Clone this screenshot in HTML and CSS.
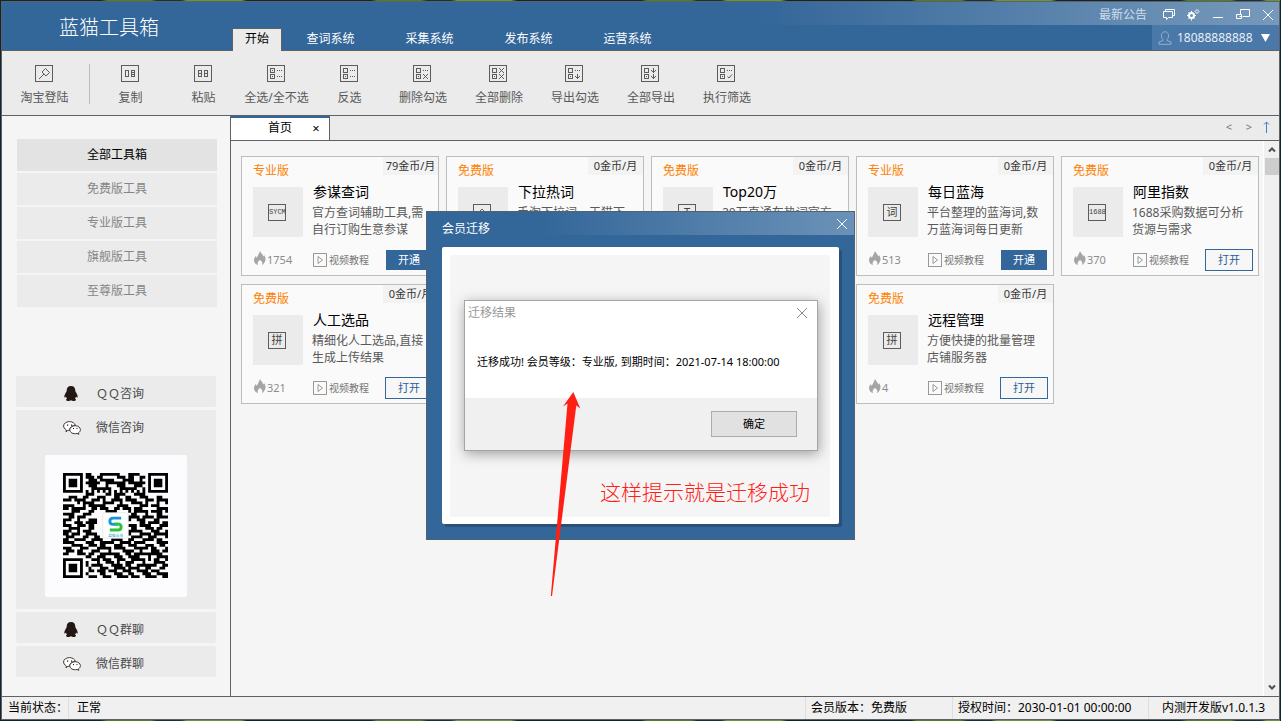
FILE: index.html
```html
<!DOCTYPE html>
<html lang="zh-CN">
<head>
<meta charset="utf-8">
<title>蓝猫工具箱</title>
<link rel="stylesheet" href="styles.css">
</head>
<body>
<svg class="defs" aria-hidden="true">
  <symbol id="frame" viewBox="0 0 18 17"><rect x=".5" y=".5" width="17" height="16"/></symbol>
  <symbol id="box-dot-top" viewBox="0 0 18 17"><rect x="3.500" y="3.500" width="4" height="4"/><path d="M5 5.500h1"/></symbol>
  <symbol id="box-top" viewBox="0 0 18 17"><rect x="3.500" y="3.500" width="4" height="4"/></symbol>
  <symbol id="box-dot-low" viewBox="0 0 18 17"><rect x="3.500" y="9.500" width="4" height="4"/><path d="M5 11.500h1"/></symbol>
  <symbol id="dots" viewBox="0 0 18 17"><path d="M10 5.500h1m1 0h1m1 0h1"/></symbol>
  <symbol id="cross" viewBox="0 0 18 17"><path d="M10 3l5 5M15 3l-5 5"/></symbol>
  <symbol id="down" viewBox="0 0 18 17"><path d="M12.500 3v5M10.500 5.500l2 2 2-2"/></symbol>
  <symbol id="flame" viewBox="0 0 12 14"><path d="M6 0c.5 2 3 3 3 5.500C10 5 10 4 10 4c1.500 2 2 4 1 6.500S8.500 14 8 14c1-2 0-4-2-5-2 1-3 3-2 5-2-.5-4-2-4-5 0-2 1-3 2-4l.5 2C4 5 5 2.500 6 0z"/></symbol>
  <symbol id="play" viewBox="0 0 14 14"><rect x=".5" y=".5" width="13" height="13"/><path d="M5 3.500v7l4.500-3.500z"/></symbol>
  <symbol id="qq" viewBox="0 0 14 15"><path d="M7 0C4 0 2.700 2 2.700 4.500c0 1-.7 1.700-1.300 3C.5 9-.1 11 .6 11.500c.5.2 1-.6 1.300-1 .2.900.6 1.600 1.200 2.100-.9.4-1.300 1-.9 1.600.6 1 3.700.8 4.800 0 1.100.8 4.200 1 4.800 0 .4-.6 0-1.200-.9-1.600.6-.5 1-1.200 1.200-2.100.3.400.8 1.200 1.300 1 .7-.5.1-2.500-.8-4-.6-1.300-1.300-2-1.300-3C11.300 2 10 0 7 0z"/></symbol>
  <symbol id="wechat" viewBox="0 0 18 14"><path d="M3 11l.4-2C1.500 7.800.6 6.500.6 5 .6 2.500 3.200.6 6.500.6c3 0 5.500 1.700 5.900 4-3.200-.1-5.700 1.800-5.700 4.100l.1.700c-.7.1-1.300 0-2-.1z"/><path d="M12.200 4.700c2.900 0 5.200 1.800 5.200 4 0 1.300-.7 2.300-1.900 3.100l.3 1.500-1.800-.8c-4 .9-7.200-1-7.200-3.800 0-2.200 2.400-4 5.400-4z"/><path class="eyes" d="M4 3.500h1.200v1.200H4zM8 3.500h1.200v1.200H8zM10 7h1v1h-1zM13.500 7h1v1h-1z"/></symbol>
</svg>

<div class="app">
  <header class="header">
    <h1 class="brand">蓝猫工具箱</h1>
    <nav class="menu">
      <a class="menu-tab active" href="#">开始</a>
      <a class="menu-tab" href="#">查词系统</a>
      <a class="menu-tab" href="#">采集系统</a>
      <a class="menu-tab" href="#">发布系统</a>
      <a class="menu-tab" href="#">运营系统</a>
    </nav>
    <div class="window-area">
      <div class="window-bar">
        <a class="notice" href="#">最新公告</a>
        <button class="win-btn" aria-label="消息"><svg width="12" height="12" viewBox="0 0 12 12"><path d="M2.500 2.500v-2h9v6h-2M.5 2.500h9v6h-4l-2 2v-2h-3z"/></svg></button>
        <button class="win-btn" aria-label="设置"><svg width="13" height="12" viewBox="0 0 13 12"><circle cx="4.500" cy="6.500" r="2.500" stroke-width="2"/><path d="M4.500 2v1M4.500 10v1.500M0 6.500h1M8 6.500h1M1.500 3.500l1 1M1.500 9.500l1-1M7.500 9.500l-1-1M10 .5l2 2-2 2-2-2z"/></svg></button>
        <button class="win-btn" aria-label="最小化"><svg width="12" height="12" viewBox="0 0 12 12"><path d="M1 8.500h10"/></svg></button>
        <button class="win-btn" aria-label="还原"><svg width="14" height="12" viewBox="0 0 14 12"><path d="M4.500 5.500v-5h9v7h-7M.5 5.500h5v4h-5zM3.500 7.500h2"/></svg></button>
        <button class="win-btn" aria-label="关闭"><svg width="12" height="12" viewBox="0 0 12 12"><path d="M1 1l10 10M11 1L1 11"/></svg></button>
      </div>
      <button class="account">
        <svg class="user" width="14" height="14" viewBox="0 0 14 14"><path d="M5 8.500C2.500 6 3 .8 7 .8s4.500 5.200 2 7.700v1l4 1.500v2.300H1V11l4-1.500z"/></svg>
        <span>18088888888</span>
        <svg class="caret" width="9" height="8" viewBox="0 0 9 8"><path d="M0 0h9L4.500 8z"/></svg>
      </button>
    </div>
  </header>

  <div class="toolbar">
    <button class="tool login"><svg class="tool-icon"><use href="#frame"/><path class="slant" d="M10.500 3.500l4 4-3.500 3.500-4-4zM9 9l-5 5"/></svg>淘宝登陆</button>
    <div class="tool-group">
      <button class="tool"><svg class="tool-icon"><use href="#frame"/><path d="M4.500 5.500h3v6h-3zM10.500 5.500h3v6h-3zM10.500 7.500h3M10.500 9.500h3"/></svg>复制</button>
      <button class="tool"><svg class="tool-icon"><use href="#frame"/><path d="M4.500 5.500h3v6h-3zM4.500 8.500h3M10.500 5.500h3v6h-3zM10.500 8.500h3"/></svg>粘贴</button>
      <button class="tool"><svg class="tool-icon"><use href="#frame"/><use href="#box-dot-top"/><use href="#box-dot-low"/><use href="#dots"/><use href="#dots" y="6"/></svg>全选/全不选</button>
      <button class="tool"><svg class="tool-icon"><use href="#frame"/><use href="#box-top"/><use href="#box-dot-low"/><use href="#dots"/><use href="#dots" y="6"/></svg>反选</button>
    </div>
    <div class="tool-group wide">
      <button class="tool"><svg class="tool-icon"><use href="#frame"/><use href="#box-top"/><use href="#box-dot-low"/><use href="#dots"/><use href="#cross" y="6"/></svg>删除勾选</button>
      <button class="tool"><svg class="tool-icon"><use href="#frame"/><use href="#box-top"/><use href="#box-dot-low"/><use href="#cross"/><use href="#cross" y="6"/></svg>全部删除</button>
      <button class="tool"><svg class="tool-icon"><use href="#frame"/><use href="#box-top"/><use href="#box-dot-low"/><use href="#dots"/><use href="#down" y="6"/></svg>导出勾选</button>
      <button class="tool"><svg class="tool-icon"><use href="#frame"/><use href="#box-top"/><use href="#box-dot-low"/><use href="#down"/><use href="#down" y="6"/></svg>全部导出</button>
      <button class="tool"><svg class="tool-icon"><use href="#frame"/><use href="#box-top"/><use href="#box-dot-low"/><use href="#dots"/><path class="slant" d="M10.500 11.500l1.500 1.500 3-3.500"/></svg>执行筛选</button>
    </div>
  </div>

  <div class="workspace">
    <aside class="sidebar">
      <nav class="filters">
        <a class="filter active" href="#">全部工具箱</a>
        <a class="filter" href="#">免费版工具</a>
        <a class="filter" href="#">专业版工具</a>
        <a class="filter" href="#">旗舰版工具</a>
        <a class="filter" href="#">至尊版工具</a>
      </nav>
      <div class="contacts">
        <a class="contact" href="#"><svg class="qq" width="14" height="15"><use href="#qq"/></svg><span>ＱＱ咨询</span></a>
        <div class="contact-open">
          <a class="contact" href="#"><svg class="wechat" width="18" height="14"><use href="#wechat"/></svg><span>微信咨询</span></a>
          <div class="qr-card">
            <svg class="qr" viewBox="0 0 37 37" role="img" aria-label="微信二维码">
              <path id="qr-modules" d=""/>
              <rect class="logo-bg" x="14" y="14" width="9" height="9" rx="1"/>
              <path class="logo-top" d="M20.500 15.900h-2.800q-1.200 0-1.200 1.100t1.200 1.100h1.800"/>
              <path class="logo-low" d="M16.500 20.100h2.800q1.200 0 1.200-1.100t-1.200-1.100h-1.300"/>
              <text x="18.500" y="22.400" text-anchor="middle">蓝猫出海</text>
            </svg>
          </div>
        </div>
        <a class="contact" href="#"><svg class="qq" width="14" height="15"><use href="#qq"/></svg><span>ＱＱ群聊</span></a>
        <a class="contact" href="#"><svg class="wechat" width="18" height="14"><use href="#wechat"/></svg><span>微信群聊</span></a>
      </div>
    </aside>

    <main class="main">
      <div class="page-tabs">
        <div class="page-tab"><span>首页</span><button class="tab-close" aria-label="关闭标签">×</button></div>
        <div class="tab-nav">
          <button class="nav-btn">&lt;</button>
          <button class="nav-btn">&gt;</button>
          <button class="nav-btn up" aria-label="收起"><svg width="7" height="12" viewBox="0 0 7 12"><path d="M3.500 12V1M1 3.500L3.500 1 6 3.500"/></svg></button>
        </div>
      </div>
      <div class="scroll-area">
        <div class="cards">
          <article class="card">
            <div class="card-head"><span class="tier">专业版</span><span class="price">79金币/月</span></div>
            <div class="card-body"><div class="thumb"><span class="glyph tiny">SYCM</span></div><div class="info"><h2>参谋查词</h2><p>官方查词辅助工具,需自行订购生意参谋</p></div></div>
            <div class="card-foot"><span class="heat"><svg class="flame"><use href="#flame"/></svg>1754</span><a class="video" href="#"><svg class="play"><use href="#play"/></svg>视频教程</a><button class="action solid">开通</button></div>
          </article>
          <article class="card">
            <div class="card-head"><span class="tier">免费版</span><span class="price">0金币/月</span></div>
            <div class="card-body"><div class="thumb"><svg class="tool-icon"><use href="#frame"/><path class="slant" d="M5 9l4-4 4 4"/></svg></div><div class="info"><h2>下拉热词</h2><p>手淘下拉词、天猫下</p></div></div>
          </article>
          <article class="card">
            <div class="card-head"><span class="tier">免费版</span><span class="price">0金币/月</span></div>
            <div class="card-body"><div class="thumb"><span class="glyph">T</span></div><div class="info"><h2>Top20万</h2><p>20万直通车热词官方</p></div></div>
          </article>
          <article class="card">
            <div class="card-head"><span class="tier">专业版</span><span class="price">0金币/月</span></div>
            <div class="card-body"><div class="thumb"><span class="glyph">词</span></div><div class="info"><h2>每日蓝海</h2><p>平台整理的蓝海词,数万蓝海词每日更新</p></div></div>
            <div class="card-foot"><span class="heat"><svg class="flame"><use href="#flame"/></svg>513</span><a class="video" href="#"><svg class="play"><use href="#play"/></svg>视频教程</a><button class="action solid">开通</button></div>
          </article>
          <article class="card">
            <div class="card-head"><span class="tier">免费版</span><span class="price">0金币/月</span></div>
            <div class="card-body"><div class="thumb"><span class="glyph tiny">1688</span></div><div class="info"><h2>阿里指数</h2><p>1688采购数据可分析货源与需求</p></div></div>
            <div class="card-foot"><span class="heat"><svg class="flame"><use href="#flame"/></svg>370</span><a class="video" href="#"><svg class="play"><use href="#play"/></svg>视频教程</a><button class="action">打开</button></div>
          </article>
          <article class="card">
            <div class="card-head"><span class="tier">免费版</span><span class="price">0金币/月</span></div>
            <div class="card-body"><div class="thumb"><span class="glyph">拼</span></div><div class="info"><h2>人工选品</h2><p>精细化人工选品,直接生成上传结果</p></div></div>
            <div class="card-foot"><span class="heat"><svg class="flame"><use href="#flame"/></svg>321</span><a class="video" href="#"><svg class="play"><use href="#play"/></svg>视频教程</a><button class="action">打开</button></div>
          </article>
          <article class="card fourth">
            <div class="card-head"><span class="tier">免费版</span><span class="price">0金币/月</span></div>
            <div class="card-body"><div class="thumb"><span class="glyph">拼</span></div><div class="info"><h2>远程管理</h2><p>方便快捷的批量管理店铺服务器</p></div></div>
            <div class="card-foot"><span class="heat"><svg class="flame"><use href="#flame"/></svg>4</span><a class="video" href="#"><svg class="play"><use href="#play"/></svg>视频教程</a><button class="action">打开</button></div>
          </article>
        </div>
        <div class="scrollbar">
          <svg width="8" height="17" viewBox="0 0 8 17"><path d="M1 10.500L4 7.500l3 3"/></svg>
          <div class="thumb-bar"></div>
          <svg class="scroll-down" width="8" height="17" viewBox="0 0 8 17"><path d="M1 6.500L4 9.500l3-3"/></svg>
        </div>
      </div>
    </main>
  </div>

  <footer class="status">
    <span class="cell label">当前状态：</span>
    <span class="cell">正常</span>
    <span class="cell edition">会员版本：免费版</span>
    <span class="cell expiry">授权时间：2030-01-01 00:00:00</span>
    <span class="cell version">内测开发版v1.0.1.3</span>
  </footer>
</div>

<div class="overlay">
  <section class="dialog" role="dialog" aria-labelledby="dialog-title">
    <div class="dialog-head">
      <h2 id="dialog-title">会员迁移</h2>
      <button class="dialog-close" aria-label="关闭"><svg width="12" height="12" viewBox="0 0 12 12"><path d="M1 1l10 10M11 1L1 11"/></svg></button>
    </div>
    <div class="dialog-page">
      <div class="dialog-panel">
        <section class="message" role="alertdialog" aria-labelledby="message-title">
          <div class="message-head">
            <h3 id="message-title">迁移结果</h3>
            <button class="message-close" aria-label="关闭"><svg width="12" height="12" viewBox="0 0 12 12"><path d="M1 1l10 10M11 1L1 11"/></svg></button>
          </div>
          <p class="message-text">迁移成功! 会员等级：专业版, 到期时间：2021-07-14 18:00:00</p>
          <div class="message-foot"><button class="ok">确定</button></div>
        </section>
        <p class="hint">这样提示就是迁移成功</p>
      </div>
    </div>
    <svg class="arrow" width="32" height="205" viewBox="0 0 32 205" aria-hidden="true"><path d="M23.300 0L30.300 16.500 26.300 13.500 2 204H.8L17.500 11.500 13 14.500z"/></svg>
  </section>
</div>
<script src="qr.js"></script>
</body>
</html>
```

FILE: styles.css
```css
* { box-sizing: border-box; }

html, body { height: 100%; margin: 0; }

body {
  padding: 1px;
  overflow: hidden;
  background: #10262e repeating-linear-gradient(90deg, #10262e 0 100px, #4f7d2c 106px 150px, #17313a 156px 180px, #6b9440 186px 240px, #10262e 246px 270px) center / calc(100% - 2px) 100% no-repeat;
  font: 12px/16px "Noto Sans", "Noto Sans CJK SC", sans-serif;
  color: #000;
}

h1, h2, h3, p { margin: 0; font-weight: 400; }
a { color: inherit; text-decoration: none; }
button { margin: 0; padding: 0; border: 0; background: none; font: inherit; color: inherit; cursor: pointer; }
svg { display: block; flex: none; fill: none; }
.defs { position: absolute; width: 0; height: 0; }

.app { display: flex; flex-direction: column; height: 100%; border: 1px solid #5f6265; background: #f5f5f5; }

/* header */
.header { display: flex; height: 49px; flex: none; border-bottom: 1px solid #5f6265; background: #336699; color: #fff; }
.brand { width: 230px; flex: none; padding: 11px 0 0 57px; font-size: 20px; font-weight: 300; line-height: 30px; }
.menu { display: flex; align-items: flex-end; }
.menu-tab { width: 99px; padding: 0 0 3px 2px; text-align: center; }
.menu-tab.active { width: 50px; height: 23px; padding: 2px 0 0; margin: 0 -2px -1px 0; border: 1px solid #5f6265; border-bottom: 0; background: #ebebeb; color: #000; }
.window-area { display: flex; flex: 1; flex-direction: column; align-items: flex-end; }
.window-bar { display: flex; align-items: center; justify-content: flex-end; gap: 12px; width: 100%; height: 23px; padding: 2px 5px 0 0; background: linear-gradient(90deg, #336699 80px, #7799bb); }
.notice { margin-right: 4px; color: #d3dfea; }
.win-btn svg, .dialog-close svg { stroke: #fff; }
.account { display: flex; align-items: center; width: 127px; height: 25px; padding-left: 6px; background: #4a78a8; color: #e8eff6; }
.user { margin-right: 5px; stroke: #8fb0d2; }
.caret { margin-left: 8px; fill: #fff; }

/* toolbar */
.toolbar { display: flex; height: 65px; flex: none; padding-top: 13px; border-bottom: 1px solid #5f6265; background: #ebebeb; color: #595959; }
.tool { display: flex; flex-direction: column; align-items: center; gap: 8px; width: 73px; height: 42px; white-space: nowrap; }
.tool.login { width: 88px; height: 40px; margin-right: 4px; padding-right: 2px; border-right: 1px solid #bdbdbd; }
.tool-group { display: flex; }
.wide { margin-left: -1px; }
.wide .tool { width: 76px; }
.tool-icon { width: 18px; height: 17px; margin-right: 2px; stroke: #5c5c5c; shape-rendering: crispEdges; }
.tool .tool-icon { margin-top: 1px; }
.slant { shape-rendering: auto; }

/* sidebar */
.workspace { display: flex; flex: 1; min-height: 0; }
.sidebar { display: flex; flex: none; flex-direction: column; justify-content: space-between; width: 229px; padding: 23px 13px 19px 14px; border-right: 1px solid #5f6265; }
.filters { display: flex; flex-direction: column; gap: 2px; margin-left: 1px; }
.filter { height: 32px; background: #ebebeb; color: #858585; line-height: 31px; text-align: center; }
.filter.active { background: #e3e3e3; color: #000; }
.contacts { display: flex; flex-direction: column; gap: 3px; width: 200px; }
.contact { display: grid; grid-template-columns: 33px 1fr; align-items: center; height: 31px; padding: 4px 0 0 47px; border-radius: 2px; background: #ebebeb; color: #4a4a4a; }
.contact-open { height: 199px; background: #ebebeb; }
.qq { margin-left: 1px; fill: #231815; }
.wechat { stroke: #3e3532; fill: #fff; }
.eyes { stroke: none; fill: #231815; }
.qr-card { width: 142px; height: 142px; margin: 14px 0 0 29px; padding: 18px; border-radius: 2px; background: #fcfcfe; }
.qr { width: 105px; height: 105px; overflow: visible; fill: #000; }
.logo-bg { fill: #fff; stroke: #ddd; stroke-width: .2; }
.logo-top, .logo-low { fill: none; stroke: #1296d8; stroke-width: 1; }
.logo-low { stroke: #2ac43a; }
.qr text { fill: #35a5d5; font-size: 1.3px; }

/* main column */
.main { display: flex; flex: 1; flex-direction: column; min-width: 0; }
.page-tabs { display: flex; justify-content: space-between; height: 25px; flex: none; border-bottom: 1px solid #5f6265; background: #ebebeb; }
.page-tab { display: flex; align-items: center; justify-content: flex-end; gap: 19px; width: 99px; padding: 0 8px 2px 0; border-top: 2px solid #336699; border-right: 1px solid #5f6265; background: #fff; }
.tab-close { width: 10px; font-size: 13px; }
.tab-nav { display: flex; align-items: center; gap: 12px; padding: 0 9px 2px 0; color: #777; }
.nav-btn { width: 8px; font-size: 11px; }
.nav-btn.up { width: 7px; margin-left: -2px; }
.up svg { stroke: #3f83c2; }
.scroll-area { display: flex; flex: 1; min-height: 0; }
.cards { display: grid; grid-template-columns: repeat(auto-fill, 198px); grid-auto-rows: 120px; align-content: start; flex: 1; gap: 8px 7px; padding: 15px 0 15px 10px; }
.card { border: 1px solid #bdbdbd; background: #fafafa; }
.fourth { grid-column-start: 4; }
.card-head { display: flex; justify-content: space-between; height: 25px; padding-left: 11px; }
.tier { padding-top: 6px; color: #ff8000; }
.price { width: 55px; height: 18px; background: #f3f3f3; color: #333; font-size: 11px; line-height: 18px; text-align: center; }
.card-body { display: flex; gap: 9px; height: 67px; padding: 0 9px 0 11px; }
.thumb { display: grid; flex: none; place-items: center; width: 50px; height: 50px; margin-top: 5px; padding-right: 2px; background: #ebebeb; }
.thumb .tool-icon { margin-right: 0; }
.glyph { width: 18px; height: 17px; border: 1px solid #5c5c5c; color: #444; font-size: 11px; line-height: 14px; text-align: center; }
.glyph.tiny { font: 7px/15px "Liberation Mono", monospace; }
.info { min-width: 0; color: #595959; }
.info h2 { margin-bottom: 3px; padding: 1px 0 0 1px; color: #000; font-size: 14px; line-height: 18px; }
.info p { line-height: 17px; }
.card-foot { display: flex; align-items: center; height: 22px; padding: 0 5px 0 12px; }
.heat { display: flex; align-items: center; gap: 1px; width: 59px; color: #8c8c8c; font-size: 11px; }
.flame { width: 12px; height: 14px; margin-bottom: 4px; fill: #a5a5a5; }
.video { display: flex; align-items: center; gap: 2px; color: #777; font-size: 10px; }
.play { width: 14px; height: 14px; stroke: #999; }
.action { width: 48px; height: 22px; margin-left: auto; border: 1px solid #336699; background: #f7f7f7; color: #2c5f95; font-size: 11px; line-height: 20px; }
.action.solid { width: 46px; height: 20px; margin-right: 1px; background: #336699; color: #fff; line-height: 18px; }
.scrollbar { display: flex; flex: none; flex-direction: column; align-items: center; width: 16px; border-left: 1px solid #fff; background: #f0f0f0; }
.scrollbar svg { stroke: #505050; stroke-width: 2; }
.thumb-bar { width: 14px; height: 17px; background: #cdcdcd; }
.scroll-down { margin-top: auto; }

/* status bar */
.status { display: flex; height: 23px; flex: none; border-top: 1px solid #5f6265; background: #f0f0f0; }
.cell { padding: 2px 0 0 8px; line-height: 17px; white-space: nowrap; }
.cell + .cell { border-left: 1px solid #dedede; }
.label { width: 66px; padding-left: 6px; }
.edition { width: 147px; margin-left: auto; padding-left: 5px; }
.expiry { width: 196px; padding-left: 5px; }
.version { width: 131px; padding-left: 13px; }

/* dialogs */
.overlay { position: fixed; inset: 0; display: grid; place-items: center; padding-top: 30px; }
.dialog { position: relative; width: 429px; padding: 0 15px 15px; border: 1px solid #53626f; background: #336699; }
.dialog-head { display: flex; justify-content: space-between; height: 35px; margin: 0 -15px; padding: 6px 6px 0 15px; background: linear-gradient(90deg, #336699 110px, #6b92b8) top / 100% 23px no-repeat; color: #fff; }
.dialog-head h2 { padding-top: 3px; font-size: 12px; line-height: 16px; }
.dialog-close { height: 12px; }
.dialog-page { height: 277px; padding: 8px 9px 7px 8px; border-radius: 2px; background: #fff; box-shadow: 3px 3px 0 #28507a; }
.dialog-panel { height: 100%; padding: 45px 12px 0 14px; background: #f5f5f5; }
.message { border: 1px solid #a5a5a5; background: #fff; box-shadow: 1px 3px 12px rgba(0, 0, 0, .35); }
.message-head { display: flex; justify-content: space-between; padding: 3px 9px 0 3px; color: #999; }
.message-head h3 { font-size: 12px; line-height: 18px; }
.message-close { height: 12px; margin-top: 3px; }
.message-close svg { stroke: #8a8a8a; }
.message-text { padding: 32px 12px 28px; font-size: 11px; line-height: 16px; white-space: nowrap; }
.message-foot { display: flex; justify-content: flex-end; height: 52px; padding: 13px 20px 0 0; background: #f0f0f0; }
.ok { width: 86px; height: 26px; border: 1px solid #adadad; background: #e1e1e1; font-size: 11px; }
.hint { margin-top: 26px; padding-right: 8px; color: #ff2015; font-size: 21px; font-weight: 300; line-height: 30px; text-align: right; }
.arrow { position: absolute; top: 180px; left: 123px; fill: #ff2015; }
```

FILE: qr.js
```js
// Modules of the contact code, one string per row.
const rows = [
  "1111111011000111111100011110001111111",
  "1000001011101100000111011001101000001",
  "1011101001110111110001111001001011101",
  "1011101011111001111111011111101011101",
  "1011101001110001000111000111001011101",
  "1000001000111111100011111100101000001",
  "1111111010101010101010101010101111111",
  "0000000011100001101111000111100000000",
  "0011100110001110001100110001110001100",
  "1110111100111010011110111100011101111",
  "0000010111100011110010001111010001001",
  "1111000101111110000111100001110111000",
  "1101111100110111001101110111000001111",
  "0001110001100001111000010111110111101",
  "1111000111000000000000001100010001100",
  "0011011100000000000000011110111101111",
  "1110010001110000000000010011100011000",
  "1000111011110000000000000001101111011",
  "1110011101100000000000011101111000111",
  "0011110001100000000000001100011101100",
  "1110010111000000000000011111000111001",
  "1101110011110000000000010001111011111",
  "0111000110011000000000001111001110001",
  "1100111100111100011110011000111101100",
  "1111000011100111110011110111100001111",
  "0001111001110110001110011100011100110",
  "1110001110001111101111000111110110001",
  "0111011000111000100001111001000111011",
  "1100011101100111111100110111111111100",
  "0000000011001110001110011110001001111",
  "1111111000111011100111001111101011001",
  "1000001010001001110100111000100011110",
  "1011101010111100011110110011111110011",
  "1011101001000111001111011110011000110",
  "1011101001101110111001110011110111000",
  "1000001010000110001110011000111001111",
  "1111111001110011100111101110011110011"
];
let d = "";
rows.forEach((row, y) => {
  for (const run of row.matchAll(/1+/g)) {
    d += `M${run.index} ${y}h${run[0].length}v1h-${run[0].length}z`;
  }
});
document.getElementById("qr-modules").setAttribute("d", d);
```
